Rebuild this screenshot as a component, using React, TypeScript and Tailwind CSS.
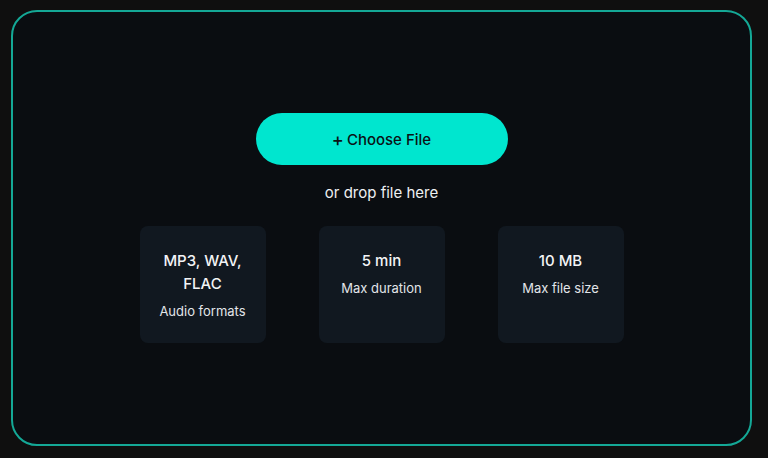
export default function App() {
  const specs = [
    { value: "MP3, WAV, FLAC", label: "Audio formats" },
    { value: "5 min", label: "Max duration" },
    { value: "10 MB", label: "Max file size" },
  ];

  return (
    <div className="h-[458px] w-[768px] overflow-hidden bg-[#0f0f0f] pl-[11px] pt-[10px] font-['Inter','Noto_Sans',sans-serif]">
      <div className="flex h-[436px] w-[741px] flex-col items-center justify-center rounded-[26px] border-2 border-[#14a896] bg-[#0a0d11]">
        <button className="flex h-[52px] w-[252px] items-center justify-center gap-[3px] rounded-full bg-[#00e6cf] pt-[2px] text-[15px] font-medium text-[#0b1215]">
          <span className="text-[18px] font-medium leading-none">+</span>
          <span>Choose File</span>
        </button>
        <p className="mt-[17px] text-[15px] leading-[22px] text-[#eef0f2]">or drop file here</p>
        <div className="mt-[22px] flex gap-[53px]">
          {specs.map((s) => (
            <div
              key={s.label}
              className="flex h-[117px] w-[126px] flex-col items-center rounded-lg bg-[#111820] px-4 pt-[23px] text-center"
            >
              <div className="text-[15px] font-medium leading-[23px] text-[#f3f4f6]">{s.value}</div>
              <div className="mt-[6px] text-[13px] leading-[20px] text-[#e2e5e9]">{s.label}</div>
            </div>
          ))}
        </div>
      </div>
    </div>
  );
}
